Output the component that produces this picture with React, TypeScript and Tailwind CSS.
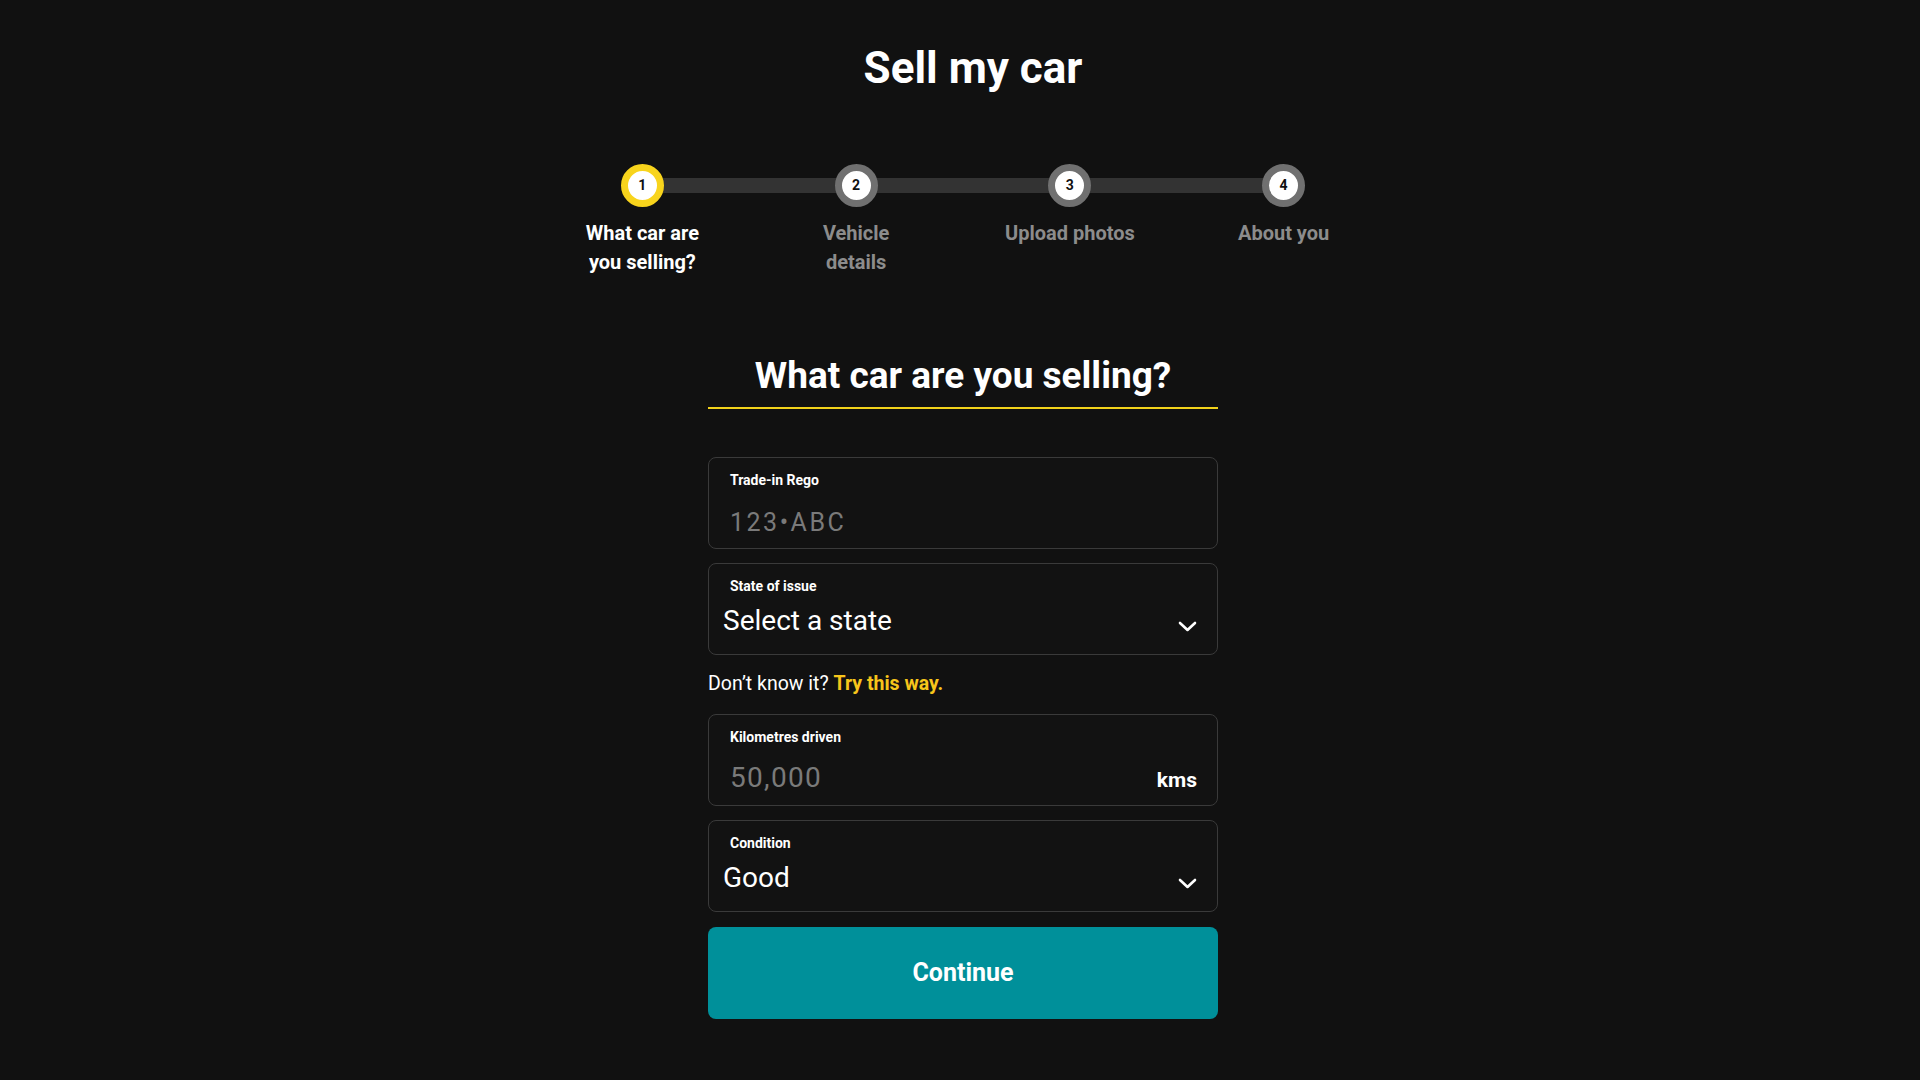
const steps = [
  { n: 1, label: ["What car are", "you selling?"], active: true },
  { n: 2, label: ["Vehicle", "details"], active: false },
  { n: 3, label: ["Upload photos"], active: false },
  { n: 4, label: ["About you"], active: false },
];

function Stepper() {
  return (
    <div className="relative mt-[74px] flex w-[855px]">
      {/* track behind the circles */}
      <div className="absolute left-[107px] right-[107px] top-[14px] h-[15px] bg-[#333333]" />
      {steps.map((s) => (
        <div key={s.n} className="relative flex w-[213.75px] flex-col items-center">
          <div
            className={`flex h-[43px] w-[43px] items-center justify-center rounded-full border-[7px] bg-white text-[14px] font-bold text-[#111111] ${
              s.active ? "border-[#f8d41c]" : "border-[#707070]"
            }`}
          >
            {s.n}
          </div>
          <div
            className={`mt-[12px] text-center text-[20px] font-bold leading-[29px] ${
              s.active ? "text-white" : "text-[#8c8c8c]"
            }`}
          >
            {s.label.map((l) => (
              <div key={l}>{l}</div>
            ))}
          </div>
        </div>
      ))}
    </div>
  );
}

function Chevron() {
  return (
    <svg width="19" height="11" viewBox="0 0 19 11" fill="none" className="mb-[3px]">
      <path d="M2 2 L9.5 9 L17 2" stroke="white" strokeWidth="2.6" strokeLinecap="round" strokeLinejoin="round" />
    </svg>
  );
}

function FieldLabel({ children }: { children: React.ReactNode }) {
  return <div className="text-[14px] font-bold leading-[20px] text-white">{children}</div>;
}

function TextField({ label, placeholder, suffix, big }: { label: string; placeholder: string; suffix?: string; big?: boolean }) {
  return (
    <div className="flex h-[92px] flex-col rounded-lg border border-[#3a3a3a] bg-[#121212] pl-[21px] pr-[20px] pt-[12px]">
      <FieldLabel>{label}</FieldLabel>
      <div className={`flex items-baseline justify-between ${big ? "mt-[17px]" : "mt-[19px]"}`}>
        <span
          className={`leading-[28px] text-[#7a7a7a] ${big ? "text-[28px] tracking-[1.3px]" : "text-[25px] tracking-[2.5px]"}`}
        >
          {placeholder}
        </span>
        {suffix && <span className="text-[21px] font-bold text-white">{suffix}</span>}
      </div>
    </div>
  );
}

function SelectField({ label, value }: { label: string; value: string }) {
  return (
    <div className="flex h-[92px] flex-col rounded-lg border border-[#3a3a3a] bg-[#121212] pl-[21px] pr-[20px] pt-[12px]">
      <FieldLabel>{label}</FieldLabel>
      <div className="mt-[11px] flex items-end justify-between">
        <span className="-ml-[7px] text-[28px] leading-[28px] text-white">{value}</span>
        <Chevron />
      </div>
    </div>
  );
}

export default function App() {
  return (
    <div
      className="flex min-h-screen flex-col items-center bg-[#111111] pl-[6px] text-white"
      style={{ fontFamily: "Roboto, 'Noto Sans', sans-serif" }}
    >
      <h1 className="mt-[46px] pl-[20px] text-[44px] font-bold leading-[44px]">Sell my car</h1>

      <Stepper />

      <div className="mt-[77px] flex w-[510px] flex-col">
        <h2 className="border-b-2 border-[#f2d21b] pb-[9px] text-center text-[37px] font-bold leading-[44px]">
          What car are you selling?
        </h2>

        <div className="mt-[48px]">
          <TextField label="Trade-in Rego" placeholder="123•ABC" />
        </div>
        <div className="mt-[14px]">
          <SelectField label="State of issue" value="Select a state" />
        </div>

        <p className="mt-[15px] text-[19.5px] leading-[28px] text-white">
          Don’t know it? <span className="font-bold text-[#f7c51b]">Try this way.</span>
        </p>

        <div className="mt-[16px]">
          <TextField label="Kilometres driven" placeholder="50,000" suffix="kms" big />
        </div>
        <div className="mt-[14px]">
          <SelectField label="Condition" value="Good" />
        </div>

        <button className="mt-[15px] flex h-[92px] items-center justify-center rounded-lg bg-[#00909a] text-[25px] font-bold text-white">
          Continue
        </button>
      </div>
    </div>
  );
}
